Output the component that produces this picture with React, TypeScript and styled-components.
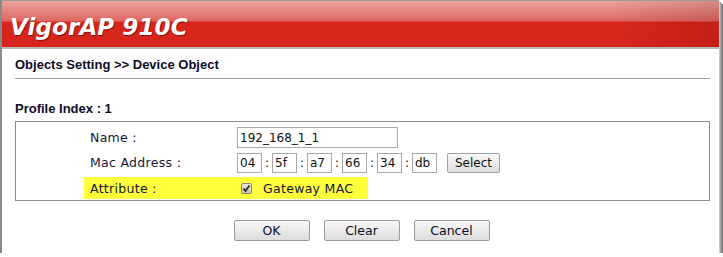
import React from 'react'
import styled, {createGlobalStyle} from 'styled-components'

const GlobalStyle = createGlobalStyle`
    html, body {
        margin: 0;
        padding: 0;
        background: #ffffff;
    }
`

const Frame = styled.div`
    box-sizing: border-box;
    width: 719px;
    height: 253px;
    border-left: 2px solid #8a8a8a;
    border-top: 1px solid #9a9a9a;
    background: #ffffff;
    box-shadow: 1px 1px 0 #c8c8c8, 2px 2px 0 #a8a8a8, 3px 3px 0 #8c8c8c, 4px 4px 0 #7a7a7a;
    display: flex;
    flex-direction: column;
    font-family: 'DejaVu Sans', Verdana, sans-serif;
`

const Header = styled.div`
    height: 48px;
    border-bottom: 2px solid #b8b8b8;
    background: linear-gradient(
            to bottom,
            #eda29e 0px,
            #e6857f 10px,
            #de6660 20px,
            #d9261d 21px,
            #d8251c 46px,
            #c92219 48px
        ),
        #d8251c;
    position: relative;
    display: flex;
    align-items: flex-end;
    padding: 0 0 7px 8px;
    box-sizing: border-box;

    &::after {
        content: '';
        position: absolute;
        inset: 0;
        background: linear-gradient(to right, rgba(0, 0, 0, 0) 85%, rgba(80, 0, 0, 0.15) 100%);
    }
`

const Title = styled.h1`
    margin: 0;
    font-family: 'DejaVu Sans', Verdana, sans-serif;
    font-weight: bold;
    font-style: italic;
    font-size: 23px;
    line-height: 26px;
    color: #ffffff;
    letter-spacing: 0.1px;
    text-shadow: 1px 1px 1px rgba(80, 0, 0, 0.6);
    position: relative;
    z-index: 1;
`

const Content = styled.div`
    padding: 0 9px 0 13px;
    display: flex;
    flex-direction: column;
`

const PageTitle = styled.div`
    font-family: 'Liberation Sans', Arial, sans-serif;
    font-weight: bold;
    font-size: 13px;
    color: #0c0c28;
    padding-top: 9px;
    height: 20px;
    line-height: 14px;
    border-bottom: 1px solid #a0a0a0;
`

const SectionTitle = styled.div`
    font-family: 'Liberation Sans', Arial, sans-serif;
    font-weight: bold;
    font-size: 13px;
    color: #0c0c28;
    line-height: 14px;
    margin-top: 23px;
    margin-bottom: 5px;
`

const TableBox = styled.div`
    border: 1px solid #8c8c8c;
    height: 80px;
    box-sizing: border-box;
    padding-top: 5px;
    display: flex;
    flex-direction: column;
    gap: 4px;
`

const Row = styled.div<{$highlight?: boolean}>`
    display: flex;
    align-items: center;
    height: ${p => (p.$highlight ? '22px' : '21px')};
    margin-left: ${p => (p.$highlight ? '68px' : '74px')};
    padding-left: ${p => (p.$highlight ? '6px' : '0')};
    width: ${p => (p.$highlight ? '278px' : 'auto')};
    background: ${p => (p.$highlight ? '#ffff3c' : 'transparent')};
`

const Label = styled.span`
    width: 147px;
    flex-shrink: 0;
    font-size: 12.5px;
    color: #15153a;
    letter-spacing: 0.3px;
`

const TextInput = styled.input<{$width: number}>`
    box-sizing: border-box;
    width: ${p => p.$width}px;
    height: ${p => (p.$width > 100 ? '21px' : '20px')};
    border: 1px solid #a9a9a9;
    padding: 0 2px;
    font-family: 'DejaVu Sans', Verdana, sans-serif;
    font-size: 12px;
    color: #111;
    outline: none;
    background: #fff;
`

const MacGroup = styled.div`
    display: flex;
    align-items: center;
`

const Colon = styled.span`
    width: 10px;
    text-align: center;
    font-size: 12px;
    color: #111;
`

const SmallButton = styled.button`
    margin-left: 10px;
    height: 20px;
    width: 53px;
    box-sizing: border-box;
    border: 1px solid #a0a0a0;
    border-radius: 2px;
    background: linear-gradient(to bottom, #f8f8f8, #dedede);
    font-family: 'DejaVu Sans', Verdana, sans-serif;
    font-size: 12px;
    color: #111;
    padding: 0;
`

const CheckBox = styled.span`
    display: inline-flex;
    align-items: center;
    justify-content: center;
    width: 11px;
    height: 11px;
    box-sizing: border-box;
    border: 1px solid #8a8a6a;
    border-radius: 2px;
    background: linear-gradient(to bottom, #e8e8d8, #c8c8b4);
    margin-left: 4px;
    margin-right: 11px;
`

const CheckText = styled.span`
    font-size: 12.5px;
    color: #15153a;
    letter-spacing: 0.3px;
`

const ButtonBar = styled.div`
    display: flex;
    justify-content: center;
    gap: 14px;
    margin-top: 19px;
    padding-right: 2px;
`

const ActionButton = styled.button`
    width: 76px;
    height: 21px;
    box-sizing: border-box;
    border: 1px solid #9c9c9c;
    border-radius: 2px;
    background: linear-gradient(to bottom, #f7f7f7, #dddddd);
    font-family: 'DejaVu Sans', Verdana, sans-serif;
    font-size: 12.5px;
    color: #0c0c28;
    padding: 0;
`

const macParts = ['04', '5f', 'a7', '66', '34', 'db']

const App = () => (
    <>
        <GlobalStyle />
        <Frame>
            <Header>
                <Title>VigorAP 910C</Title>
            </Header>
            <Content>
                <PageTitle>Objects Setting &gt;&gt; Device Object</PageTitle>
                <SectionTitle>Profile Index : 1</SectionTitle>
                <TableBox>
                    <Row>
                        <Label>Name :</Label>
                        <TextInput $width={161} defaultValue='192_168_1_1' />
                    </Row>
                    <Row>
                        <Label>Mac Address :</Label>
                        <MacGroup>
                            {macParts.map((part, i) => (
                                <React.Fragment key={i}>
                                    {i > 0 && <Colon>:</Colon>}
                                    <TextInput $width={25} defaultValue={part} />
                                </React.Fragment>
                            ))}
                            <SmallButton>Select</SmallButton>
                        </MacGroup>
                    </Row>
                    <Row $highlight>
                        <Label>Attribute :</Label>
                        <CheckBox>
                            <svg width='9' height='9' viewBox='0 0 9 9'>
                                <path d='M1.5 4.5 L3.5 7 L7.5 1.5' fill='none' stroke='#2a2a2a' strokeWidth='1.8' />
                            </svg>
                        </CheckBox>
                        <CheckText>Gateway MAC</CheckText>
                    </Row>
                </TableBox>
                <ButtonBar>
                    <ActionButton>OK</ActionButton>
                    <ActionButton>Clear</ActionButton>
                    <ActionButton>Cancel</ActionButton>
                </ButtonBar>
            </Content>
        </Frame>
    </>
)

App.displayName = 'App'
export default App
